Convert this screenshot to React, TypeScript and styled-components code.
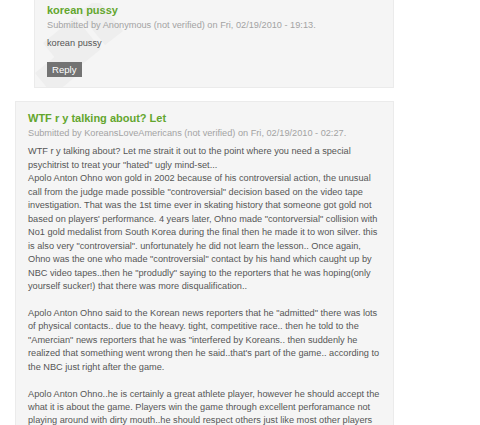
import React from 'react'
import styled, { createGlobalStyle } from 'styled-components'

const GlobalStyle = createGlobalStyle`
	body {
		margin: 0;
		background: #fff;
		font-family: 'Liberation Sans', Arial, sans-serif;
	}
`

type CommentData = {
	title: string
	author: string
	date: string
	paragraphs: string[][]
	indented?: boolean
	reply?: boolean
}

const comments: CommentData[] = [
	{
		title: 'korean pussy',
		author: 'Anonymous',
		date: 'Fri, 02/19/2010 - 19:13',
		paragraphs: [['korean pussy']],
		indented: true,
		reply: true,
	},
	{
		title: 'WTF r y talking about? Let',
		author: 'KoreansLoveAmericans',
		date: 'Fri, 02/19/2010 - 02:27',
		paragraphs: [
			[
				'WTF r y talking about? Let me strait it out to the point where you need a special psychitrist to treat your "hated" ugly mind-set...',
				'Apolo Anton Ohno won gold in 2002 because of his controversial action, the unusual call from the judge made possible "controversial" decision based on the video tape investigation. That was the 1st time ever in skating history that someone got gold not based on players\' performance. 4 years later, Ohno made "contorversial" collision with No1 gold medalist from South Korea during the final then he made it to won silver. this is also very "controversial". unfortunately he did not learn the lesson.. Once again, Ohno was the one who made "controversial" contact by his hand which caught up by NBC video tapes..then he "produdly" saying to the reporters that he was hoping(only yourself sucker!) that there was more disqualification..',
			],
			[
				'Apolo Anton Ohno said to the Korean news reporters that he "admitted" there was lots of physical contacts.. due to the heavy. tight, competitive race.. then he told to the "Amercian" news reporters that he was "interfered by Koreans.. then suddenly he realized that something went wrong then he said..that\'s part of the game.. according to the NBC just right after the game.',
			],
			[
				'Apolo Anton Ohno..he is certainly a great athlete player, however he should accept the what it is about the game. Players win the game through excellent perforamance not playing around with dirty mouth..he should respect others just like most other players do.',
			],
		],
	},
]

export default function App() {
	return (
		<>
			<GlobalStyle />
			<Thread>
				{comments.map((c) => (
					<Comment key={c.title} $indented={c.indented}>
						{c.indented && <Watermark />}
						<Title>{c.title}</Title>
						<Submitted>
							Submitted by {c.author} (not verified) on {c.date}.
						</Submitted>
						<Body>
							{c.paragraphs.map((p, i) => (
								<Paragraph key={i}>
									{p.map((line, j) => (
										<React.Fragment key={j}>
											{j > 0 && <br />}
											{line}
										</React.Fragment>
									))}
								</Paragraph>
							))}
						</Body>
						{c.reply && <ReplyButton>Reply</ReplyButton>}
					</Comment>
				))}
			</Thread>
		</>
	)
}

// faint decoration behind reply comments
function Watermark() {
	return (
		<WatermarkSvg width='100' height='90' viewBox='0 0 100 90'>
			<g fill='#eeeeee'>
				<polygon points='8,40 40,14 66,46 34,72' />
				<polygon points='44,10 62,-4 88,28 70,42' />
				<polygon points='0,70 22,52 40,74 18,92' />
			</g>
		</WatermarkSvg>
	)
}

const Thread = styled.div`
	display: flex;
	flex-direction: column;
	gap: 13px;
	width: 379px;
	margin-top: -8px;
	padding-left: 15px;
`

const Comment = styled.div<{ $indented?: boolean }>`
	position: relative;
	overflow: hidden;
	margin-left: ${(p) => (p.$indented ? '19px' : '0')};
	padding: ${(p) => (p.$indented ? '10px 12px 10px' : '9px 12px 12px')};
	background: #f5f5f5;
	border: 1px solid #ebebeb;
`

const WatermarkSvg = styled.svg`
	position: absolute;
	left: 0;
	top: 10px;
	z-index: 0;
`

const Title = styled.h3`
	position: relative;
	margin: 0;
	font-size: 11px;
	line-height: 15px;
	font-weight: bold;
	color: #63a62e;
`

const Submitted = styled.div`
	position: relative;
	font-size: 9.2px;
	line-height: 15px;
	color: #a3a3a3;
`

const Body = styled.div`
	position: relative;
	margin-top: 4px;
	font-size: 9.2px;
	line-height: 13.45px;
	color: #555;
`

const Paragraph = styled.p`
	margin: 0 0 13.45px;

	&:last-child {
		margin-bottom: 0;
	}
`

const ReplyButton = styled.button`
	position: relative;
	display: block;
	margin-top: 12px;
	padding: 0 5px;
	height: 15px;
	border: none;
	background: #737373;
	color: #fff;
	font-family: 'Liberation Sans', Arial, sans-serif;
	font-size: 9.6px;
	line-height: 15px;
`
